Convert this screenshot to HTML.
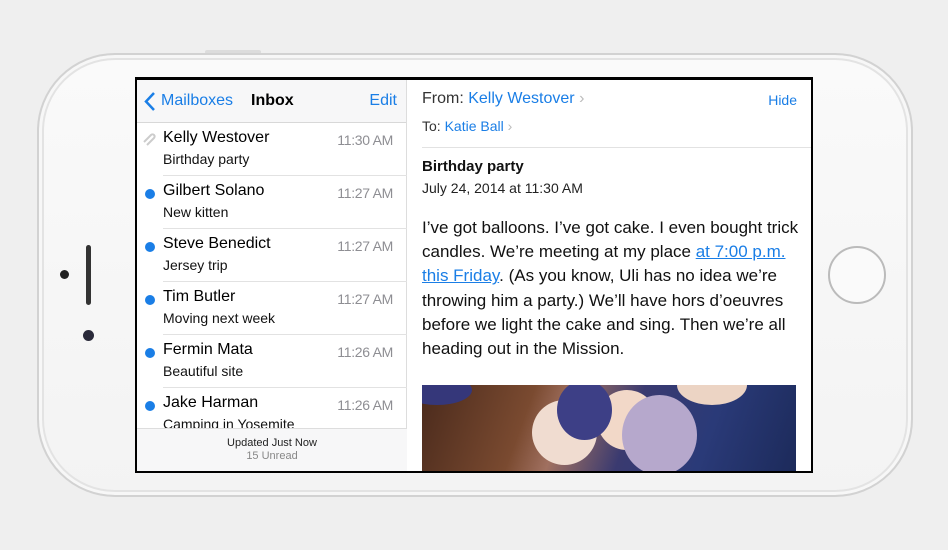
<!DOCTYPE html>
<html><head><meta charset="utf-8"><style>
*{margin:0;padding:0;box-sizing:border-box}
body{width:948px;height:550px;background:#efefef;position:relative;overflow:hidden;font-family:"Liberation Sans",sans-serif}
.phone{position:absolute;left:37px;top:53px;width:876px;height:444px;border-radius:78px;background:linear-gradient(#fafafa,#f3f3f3);border:2px solid #d2d2d2;box-shadow:inset 0 0 0 3px #f7f7f7,inset 0 0 0 5px #e3e3e3}
.btn{position:absolute;top:50px;left:205px;width:56px;height:4px;background:#dcdcdc;border-radius:2px}
.screen{position:absolute;left:135px;top:77px;width:678px;height:396px;background:#000;padding:3px 2px 2px 2px}
.in{position:absolute;left:2px;top:3px;right:2px;bottom:2px;background:#fff;overflow:hidden}
.left{position:absolute;left:0;top:0;width:270px;height:100%;background:#fff;border-right:1px solid #ddd}
.hdr{height:43px;background:#f7f7f8;border-bottom:1px solid #d8d8d8;position:relative;font-size:16px}
.blue{color:#1a7ee6}
.row{position:absolute;left:0;width:270px;height:53px}
.row .n{position:absolute;left:26px;top:6px;font-size:16px;color:#000}
.row .s{position:absolute;left:26px;top:28px;font-size:14px;color:#111}
.row .t{position:absolute;right:14px;top:9px;font-size:14px;color:#8e8e93;letter-spacing:-0.3px}
.row .d{position:absolute;left:8px;top:13px;width:10px;height:10px;border-radius:50%;background:#1a7ee6}
.row .l{position:absolute;left:26px;right:0;bottom:0;border-bottom:1px solid #e2e2e2}
.foot{position:absolute;left:0;top:348px;width:270px;height:43px;background:#f7f7f8;border-top:1px solid #ddd;text-align:center;font-size:11px;color:#222;padding-top:8px;line-height:13px}
.right{position:absolute;left:271px;top:0;right:0;height:100%}
.txt{position:absolute;left:14px;top:136px;font-size:17px;line-height:24.2px;color:#111;width:390px}
</style></head><body>
<div class="btn"></div>
<div class="phone"></div>
<div style="position:absolute;left:86px;top:245px;width:5px;height:60px;background:#333;border-radius:3px"></div>
<div style="position:absolute;left:60px;top:270px;width:9px;height:9px;background:#222;border-radius:50%"></div>
<div style="position:absolute;left:83px;top:330px;width:11px;height:11px;background:#2a2a3a;border-radius:50%"></div>
<div style="position:absolute;left:828px;top:246px;width:58px;height:58px;border-radius:50%;border:2px solid #bbb;background:#fafafa"></div>
<div class="screen"><div class="in">
<div class="left">
<div class="hdr">
<svg style="position:absolute;left:7px;top:12px" width="12" height="19"><path d="M10 1L2 9.5L10 18" stroke="#1a7ee6" stroke-width="2.5" fill="none"/></svg>
<span class="blue" style="position:absolute;left:24px;top:12px">Mailboxes</span>
<span style="position:absolute;left:114px;top:12px;font-weight:bold;color:#000">Inbox</span>
<span class="blue" style="position:absolute;right:9px;top:12px">Edit</span>
</div>
<div class="row" style="top:43px"><svg style="position:absolute;left:5px;top:9px" width="16" height="16"><path d="M4 12L11 5a2 2 0 0 1 3 3L7 15" stroke="#ccc" stroke-width="2" fill="none" transform="translate(-2,-2)"/></svg><div class="n">Kelly Westover</div><div class="s">Birthday party</div><div class="t">11:30 AM</div><div class="l"></div></div>
<div class="row" style="top:96px"><div class="d"></div><div class="n">Gilbert Solano</div><div class="s">New kitten</div><div class="t">11:27 AM</div><div class="l"></div></div>
<div class="row" style="top:149px"><div class="d"></div><div class="n">Steve Benedict</div><div class="s">Jersey trip</div><div class="t">11:27 AM</div><div class="l"></div></div>
<div class="row" style="top:202px"><div class="d"></div><div class="n">Tim Butler</div><div class="s">Moving next week</div><div class="t">11:27 AM</div><div class="l"></div></div>
<div class="row" style="top:255px"><div class="d"></div><div class="n">Fermin Mata</div><div class="s">Beautiful site</div><div class="t">11:26 AM</div><div class="l"></div></div>
<div class="row" style="top:308px"><div class="d"></div><div class="n">Jake Harman</div><div class="s">Camping in Yosemite</div><div class="t">11:26 AM</div></div>
<div class="foot">Updated Just Now<br><span style="color:#888">15 Unread</span></div>
</div>
<div class="right">
<div style="position:absolute;left:14px;top:10px;font-size:16px;color:#333">From: <span class="blue">Kelly Westover</span> <span style="color:#bbb">›</span></div>
<div class="blue" style="position:absolute;right:14px;top:12px;font-size:14px">Hide</div>
<div style="position:absolute;left:14px;top:38px;font-size:14px;color:#333">To: <span class="blue">Katie Ball</span> <span style="color:#bbb">›</span></div>
<div style="position:absolute;left:14px;right:0;top:67px;border-bottom:1px solid #e2e2e2"></div>
<div style="position:absolute;left:14px;top:78px;font-size:15px;font-weight:bold;color:#111">Birthday party</div>
<div style="position:absolute;left:14px;top:100px;font-size:14px;color:#222">July 24, 2014 at 11:30 AM</div>
<div class="txt">I’ve got balloons. I’ve got cake. I even bought trick candles. We’re meeting at my place <span class="blue" style="text-decoration:underline">at 7:00 p.m. this Friday</span>. (As you know, Uli has no idea we’re throwing him a party.) We’ll have hors d’oeuvres before we light the cake and sing. Then we’re all heading out in the Mission.</div>
<div style="position:absolute;left:14px;top:305px;width:374px;height:90px;overflow:hidden;background:linear-gradient(110deg,#4a2a1c 0%,#7a4a30 28%,#a07060 38%,#3a3a70 55%,#2a3a78 75%,#1c2a5a 100%)">
<div style="position:absolute;left:-20px;top:-10px;width:70px;height:30px;border-radius:50%;background:#35377a"></div>
<div style="position:absolute;left:110px;top:15px;width:65px;height:65px;border-radius:50%;background:#f0dcd0"></div>
<div style="position:absolute;left:175px;top:5px;width:60px;height:60px;border-radius:50%;background:#f2d8c8"></div>
<div style="position:absolute;left:135px;top:-5px;width:55px;height:60px;border-radius:50%;background:#3d3f86"></div>
<div style="position:absolute;left:200px;top:10px;width:75px;height:80px;border-radius:50%;background:#b6a8cc"></div>
<div style="position:absolute;left:255px;top:-20px;width:70px;height:40px;border-radius:50%;background:#ecd4c4"></div>
</div>
</div>
</div></div>
</body></html>
